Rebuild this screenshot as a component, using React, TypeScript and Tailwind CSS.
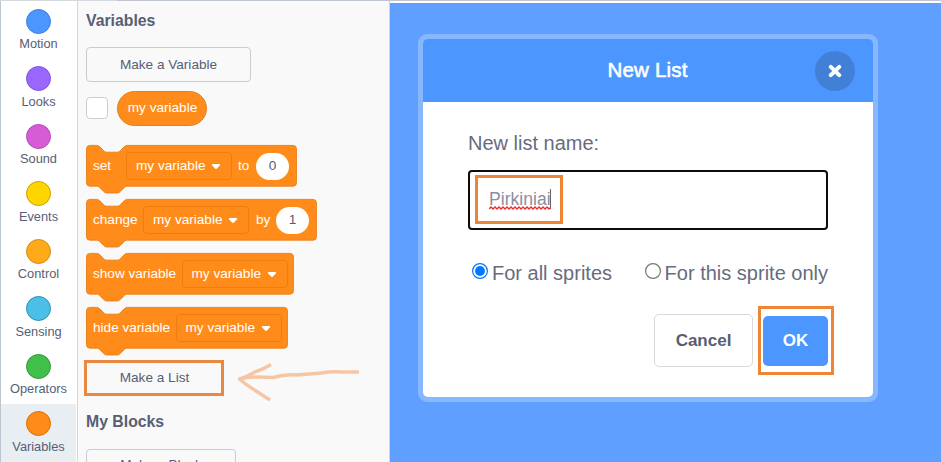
import React from "react";

const categories = [
  { name: "Motion", color: "bg-[#4c97ff] border-[#3b7fdc]" },
  { name: "Looks", color: "bg-[#9966ff] border-[#7b55d6]" },
  { name: "Sound", color: "bg-[#d65cd6] border-[#bb46bb]" },
  { name: "Events", color: "bg-[#ffd500] border-[#cca000]" },
  { name: "Control", color: "bg-[#ffab19] border-[#cf8b17]" },
  { name: "Sensing", color: "bg-[#4cbfe6] border-[#2e8eb8]" },
  { name: "Operators", color: "bg-[#40bf4a] border-[#389438]" },
  { name: "Variables", color: "bg-[#ff8c1a] border-[#db6e00]", selected: true },
];

function Category({ name, color, selected }: { name: string; color: string; selected?: boolean }) {
  return (
    <div className={`flex h-[57.5px] shrink-0 flex-col items-center pt-[7px] ${selected ? "bg-[#e9eef2]" : ""}`}>
      <div className={`size-[25px] shrink-0 rounded-full border ${color}`} />
      <div className="mt-[1.500px] text-[12.8px] leading-[17px] text-[#575e75]">{name}</div>
    </div>
  );
}

function VariableField() {
  return (
    <div className="flex h-[28px] w-[106px] shrink-0 items-center justify-between rounded-[4px] border border-[#ed7d10] pl-[9px] pr-[10px]">
      <span className="whitespace-nowrap">my variable</span>
      <svg width="10" height="7" viewBox="0 0 10 7">
        <path d="M1.5 1h7q1 .4.4 1.300L6 5.600q-1 .8-2 0L1.100 2.300Q.5 1.400 1.500 1Z" fill="#fff" />
      </svg>
    </div>
  );
}

function Block({ width, children }: { width: number; children: React.ReactNode }) {
  const right = width / 0.85 - 5.2;
  return (
    <div className="relative h-[41px] shrink-0" style={{ width }}>
      <svg className="absolute left-0 top-0 overflow-visible" width={width} height="48">
        <path
          transform="translate(0.5 0.4) scale(0.85)"
          d={`M0 4A4 4 0 0 1 4 0H12c2 0 3 1 4 2l4 4c1 1 2 2 4 2h12c2 0 3-1 4-2l4-4c1-1 2-2 4-2H${right}a4 4 0 0 1 4 4v40a4 4 0 0 1-4 4H48c-2 0-3 1-4 2l-4 4c-1 1-2 2-4 2h-12c-2 0-3-1-4-2l-4-4c-1-1-2-2-4-2H4a4 4 0 0 1-4-4z`}
          fill="#ff8c1a"
          stroke="#e67c12"
          strokeWidth="1"
        />
      </svg>
      <div className="relative flex h-full items-center pl-[7px] pt-px text-[13.6px] text-white">{children}</div>
    </div>
  );
}

function NumberInput({ value }: { value: string }) {
  return (
    <div className="flex h-[27px] w-[33px] items-center justify-center rounded-full bg-white text-[#575e75]">
      {value}
    </div>
  );
}

function Palette() {
  return (
    <div className="flex w-[312px] shrink-0 flex-col items-start border-r border-[#cfd3da] bg-[#f9f9f9] pl-[8px]">
      <h2 className="mt-[10px] h-[20px] text-[15.800px] font-bold leading-[20px] text-[#575e75]">Variables</h2>
      <button className="mt-[16px] flex h-[35px] w-[165px] shrink-0 items-center justify-center rounded-[4px] border border-[#c9ccd1] pt-px text-[13.6px] text-[#575e75]">
        Make a Variable
      </button>
      <div className="mt-[9px] flex h-[35px] shrink-0 items-center gap-[9px]">
        <div className="-mt-px size-[22px] rounded-[4px] border border-[#cbcdd1] bg-white" />
        <div className="flex h-[35px] w-[90px] items-center justify-center rounded-full border border-[#e08025] bg-[#ff8c1a] pl-px text-[13.6px] text-white">
          my variable
        </div>
      </div>
      <div className="mt-[19px] flex flex-col gap-[13px]">
        <Block width={211}>
          <span className="w-[33px]">set</span>
          <VariableField />
          <span className="ml-[6px] w-[18px]">to</span>
          <NumberInput value="0" />
        </Block>
        <Block width={231}>
          <span className="w-[50px]">change</span>
          <VariableField />
          <span className="ml-[7px] w-[20px]">by</span>
          <NumberInput value="1" />
        </Block>
        <Block width={208}>
          <span className="w-[88.500px] whitespace-nowrap">show variable</span>
          <VariableField />
        </Block>
        <Block width={202}>
          <span className="w-[82.500px] whitespace-nowrap">hide variable</span>
          <VariableField />
        </Block>
      </div>
      <div className="-ml-[2px] mt-[12px] flex h-[36px] shrink-0 items-start">
        <button className="flex h-[36px] w-[140px] items-center justify-center border-[3px] border-[#e98840] pl-px pt-px text-[13.6px] text-[#575e75]">
          Make a List
        </button>
        <svg className="ml-[14px]" width="124" height="42" viewBox="238 360 124 42" fill="none" stroke="#f6c6a4" strokeWidth="3.500">
          <path d="M271 364.500Q264 369 255 372Q246 377 239.500 379Q246 385 256 391L270 400" />
          <path d="M240 379Q247 376.500 257 377L273 377.500Q285 374 296 375Q310 374 321 373Q333 371 342 372L359 372" />
        </svg>
      </div>
      <h2 className="mt-[16px] h-[20px] text-[15.800px] font-bold leading-[20px] text-[#575e75]">My Blocks</h2>
      <button className="mt-[17px] flex h-[35px] w-[150px] shrink-0 items-center justify-center rounded-[4px] border border-[#c9ccd1] pb-[3px] text-[13.6px] text-[#575e75]">
        Make a Block
      </button>
    </div>
  );
}

function Radio({ checked, label }: { checked?: boolean; label: string }) {
  return (
    <label className="flex items-center gap-[4px] whitespace-nowrap">
      <svg className="-mt-[4px]" width="16" height="16" viewBox="0 0 16 16">
        <circle cx="8" cy="8" r="7.400" fill="#fff" stroke={checked ? "#0075ff" : "#767676"} strokeWidth="1.200" />
        {checked && <circle cx="8" cy="8" r="4.900" fill="#0075ff" />}
      </svg>
      {label}
    </label>
  );
}

function Dialog() {
  return (
    <div className="flex h-[368px] w-[460px] flex-col rounded-[9px] bg-[#86b7ff] p-[5px]">
      <header className="flex h-[63px] shrink-0 items-center rounded-t-[5px] bg-[#4c97ff] pl-[57px] pr-[18px]">
        <h1 className="flex-1 text-center text-[20.500px] tracking-[0.2px] text-white [-webkit-text-stroke:0.6px_white]">New List</h1>
        <button className="flex size-[40px] items-center justify-center rounded-full bg-[#4280d8]">
          <svg width="14" height="14" viewBox="0 0 14 14" stroke="#fff" strokeWidth="4" strokeLinecap="round">
            <path d="M2.800 2.800l8.400 8.400M11.200 2.800l-8.400 8.400" />
          </svg>
        </button>
      </header>
      <div className="flex flex-1 flex-col rounded-b-[5px] bg-white px-[45px] text-[20px] text-[#676b80]">
        <div className="mt-[29px] h-[24px] leading-[24px]">New list name:</div>
        <div className="mt-[15px] flex h-[60px] shrink-0 items-start rounded-[4px] border-2 border-[#0c0c0c] pl-[5px] pt-[3px]">
          <div className="flex h-[49px] w-[88px] flex-col border-[3px] border-[#ee8535] pl-[11px] pt-[11px]">
            <div className="flex h-[20px] items-center">
              <span className="text-[17.600px] leading-[20px] text-[#8b8e9e]">Pirkiniai</span>
              <span className="-ml-px h-[20px] w-px shrink-0 bg-[#666]" />
            </div>
            <svg className="-mt-[3px]" width="62" height="4" fill="none" stroke="#ee2a2a" strokeWidth="1.300">
              <path d="M0 3l2-2 2 2 2-2 2 2 2-2 2 2 2-2 2 2 2-2 2 2 2-2 2 2 2-2 2 2 2-2 2 2 2-2 2 2 2-2 2 2 2-2 2 2 2-2 2 2 2-2 2 2 2-2 2 2 2-2 2 2 2-2" />
            </svg>
          </div>
        </div>
        <div className="mt-[31px] flex h-[24px] items-center justify-between pl-[4px] leading-[24px]">
          <Radio checked label="For all sprites" />
          <Radio label="For this sprite only" />
        </div>
        <div className="-mr-[6px] mt-[21px] flex items-center justify-end gap-[5px] text-[17px] font-bold">
          <button className="flex h-[53px] w-[99px] items-center justify-center rounded-[5px] border border-[#d9d9d9] text-[#575e75]">
            Cancel
          </button>
          <div className="flex h-[69px] w-[76px] items-center border-[3px] border-[#ee8535] pl-[2px]">
            <button className="flex h-[50px] w-[65px] items-center justify-center rounded-[5px] bg-[#4c97ff] text-white">
              OK
            </button>
          </div>
        </div>
      </div>
    </div>
  );
}

export default function App() {
  return (
    <div className="flex h-[462px] w-[941px] flex-col overflow-hidden bg-white font-['Liberation_Sans',Arial,sans-serif]">
      <div className="flex h-px shrink-0">
        <div className="w-[117px] bg-[#d5d8dc]" />
        <div className="flex-1 bg-[#bfc5d4]" />
      </div>
      <div className="flex h-[461px]">
        <nav className="flex w-[78px] shrink-0 flex-col border-l border-r border-l-[#bcc7cf] border-r-[#d5d7db] pr-px pt-[0.500px]">
          {categories.map((c) => (
            <Category key={c.name} {...c} />
          ))}
        </nav>
        <Palette />
        <main className="mt-[2px] flex flex-1 items-start bg-[#5f9fff] pl-[28px] pt-[31px]">
          <Dialog />
        </main>
      </div>
    </div>
  );
}
